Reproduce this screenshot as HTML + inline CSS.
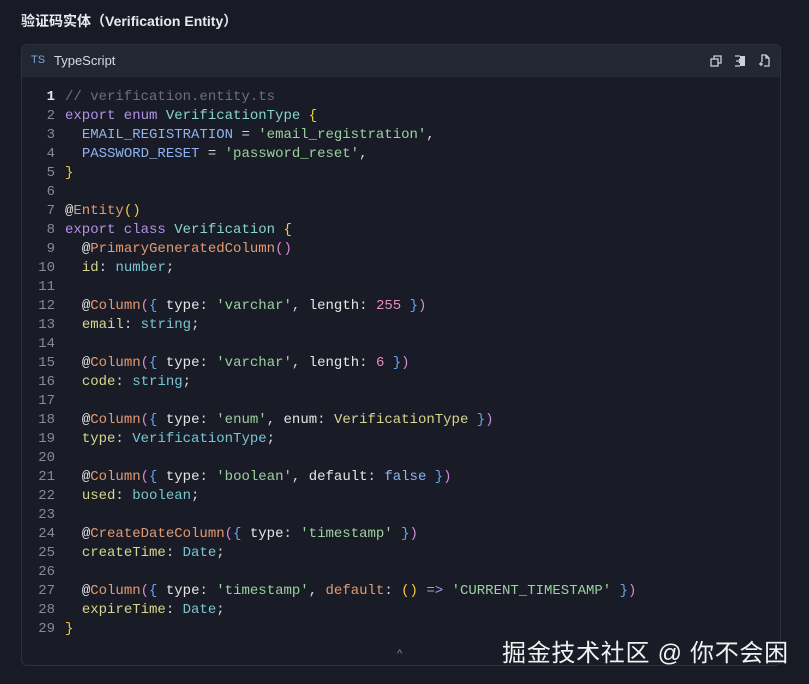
<!DOCTYPE html>
<html><head><meta charset="utf-8"><style>
body{margin:0;width:809px;height:684px;background:#181b25;font-family:"Liberation Sans","Noto Sans CJK SC",sans-serif;overflow:hidden;position:relative}
.title{position:absolute;left:21px;top:11px;font-size:14px;font-weight:bold;color:#e8e9ed}
.block{position:absolute;left:21px;top:44px;width:758px;height:620px;border:1px solid #2d3040;border-radius:6px;background:#191c26;overflow:hidden}
.hdr{height:32px;background:#232633;border-bottom:1px solid #1c1f2a;position:relative}
.hdr .ts{position:absolute;left:9px;top:9px;font-size:11px;color:#7fa6d8}
.hdr .lang{position:absolute;left:32px;top:8px;font-size:13px;color:#d8d9de}
.code{position:absolute;left:-1px;top:43px;font-family:"Liberation Mono",monospace;font-size:14px;line-height:19px;color:#d6d6d6;white-space:pre}
.ln{display:inline-block;width:34px;text-align:right;margin-right:10px;color:#858a96}
.c{color:#6b707c}.k{color:#b392e6}.t{color:#86d6cc}.e{color:#8fb3f0}.s{color:#9cd0a0}.y{color:#f2cc40}
.d{color:#e39a72}.p{color:#d6d68e}.ty{color:#78c6d2}.n{color:#e88fc0}.b{color:#6aa6ee}.pk{color:#d48ad8}.w{color:#e6e6e6}
.wm{position:absolute;left:502px;top:633px;font-size:24px;color:#f2f2f2;letter-spacing:0.7px}
.car{position:absolute;left:397px;top:648px;color:#888;font-size:11px}
</style></head><body>
<div class="title">验证码实体（Verification Entity）</div>
<div class="block">
<div class="hdr"><span class="ts">TS</span><span class="lang">TypeScript</span>
<svg style="position:absolute;left:688px;top:10px" width="12" height="12" viewBox="0 0 12 12" fill="none" stroke="#cfd0d6" stroke-width="1.3"><rect x="1" y="4" width="7" height="7"/><path d="M4 4V1h7v7H8"/></svg>
<svg style="position:absolute;left:712px;top:10px" width="12" height="12" viewBox="0 0 12 12"><rect x="6" y="1" width="5" height="10" fill="#cfd0d6"/><path d="M1 1h5M1 11h5M2 6h5M5 4l2 2-2 2" stroke="#cfd0d6" stroke-width="1.3" fill="none"/></svg>
<svg style="position:absolute;left:736px;top:9px" width="12" height="13" viewBox="0 0 12 13" fill="none" stroke="#cfd0d6" stroke-width="1.3"><path d="M4 8V1h4l3 3v8H6M8 1v3h3"/><path d="M1 10h4M3 8v4"/></svg>
</div>
<div class="code"><span class="ln" style="color:#e6e6e6;font-weight:bold">1</span><span class="c">// verification.entity.ts</span>
<span class="ln">2</span><span class="k">export enum</span> <span class="t">VerificationType</span> <span class="y">{</span>
<span class="ln">3</span>  <span class="e">EMAIL_REGISTRATION</span> = <span class="s">'email_registration'</span>,
<span class="ln">4</span>  <span class="e">PASSWORD_RESET</span> = <span class="s">'password_reset'</span>,
<span class="ln">5</span><span class="y">}</span>
<span class="ln">6</span>
<span class="ln">7</span><span class="w">@</span><span class="d">Entity</span><span class="y">()</span>
<span class="ln">8</span><span class="k">export class</span> <span class="t">Verification</span> <span class="y">{</span>
<span class="ln">9</span>  <span class="w">@</span><span class="d">PrimaryGeneratedColumn</span><span class="pk">()</span>
<span class="ln">10</span>  <span class="p">id</span>: <span class="ty">number</span>;
<span class="ln">11</span>
<span class="ln">12</span>  <span class="w">@</span><span class="d">Column</span><span class="pk">(</span><span class="b">{</span> <span class="w">type</span>: <span class="s">'varchar'</span>, <span class="w">length</span>: <span class="n">255</span> <span class="b">}</span><span class="pk">)</span>
<span class="ln">13</span>  <span class="p">email</span>: <span class="ty">string</span>;
<span class="ln">14</span>
<span class="ln">15</span>  <span class="w">@</span><span class="d">Column</span><span class="pk">(</span><span class="b">{</span> <span class="w">type</span>: <span class="s">'varchar'</span>, <span class="w">length</span>: <span class="n">6</span> <span class="b">}</span><span class="pk">)</span>
<span class="ln">16</span>  <span class="p">code</span>: <span class="ty">string</span>;
<span class="ln">17</span>
<span class="ln">18</span>  <span class="w">@</span><span class="d">Column</span><span class="pk">(</span><span class="b">{</span> <span class="w">type</span>: <span class="s">'enum'</span>, <span class="w">enum</span>: <span class="p">VerificationType</span> <span class="b">}</span><span class="pk">)</span>
<span class="ln">19</span>  <span class="p">type</span>: <span class="ty">VerificationType</span>;
<span class="ln">20</span>
<span class="ln">21</span>  <span class="w">@</span><span class="d">Column</span><span class="pk">(</span><span class="b">{</span> <span class="w">type</span>: <span class="s">'boolean'</span>, <span class="w">default</span>: <span class="e">false</span> <span class="b">}</span><span class="pk">)</span>
<span class="ln">22</span>  <span class="p">used</span>: <span class="ty">boolean</span>;
<span class="ln">23</span>
<span class="ln">24</span>  <span class="w">@</span><span class="d">CreateDateColumn</span><span class="pk">(</span><span class="b">{</span> <span class="w">type</span>: <span class="s">'timestamp'</span> <span class="b">}</span><span class="pk">)</span>
<span class="ln">25</span>  <span class="p">createTime</span>: <span class="ty">Date</span>;
<span class="ln">26</span>
<span class="ln">27</span>  <span class="w">@</span><span class="d">Column</span><span class="pk">(</span><span class="b">{</span> <span class="w">type</span>: <span class="s">'timestamp'</span>, <span class="d">default</span>: <span class="y">()</span> <span class="k">=&gt;</span> <span class="s">'CURRENT_TIMESTAMP'</span> <span class="b">}</span><span class="pk">)</span>
<span class="ln">28</span>  <span class="p">expireTime</span>: <span class="ty">Date</span>;
<span class="ln">29</span><span class="y">}</span></div>
</div>
<div class="car">^</div>
<div class="wm">掘金技术社区 @ 你不会困</div>
</body></html>
